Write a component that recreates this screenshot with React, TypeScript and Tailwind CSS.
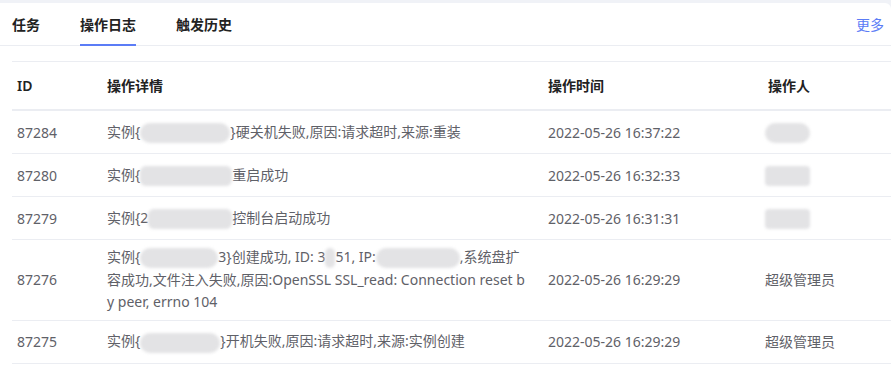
import React from 'react';

type Row = {
  id: string;
  detail: React.ReactNode;
  time: string;
  operator: React.ReactNode;
  tall?: boolean;
};

const Blur: React.FC<{ w: number; className?: string }> = ({ w, className }) => (
  <span
    className={`inline-block h-[20px] align-middle bg-[#e3e3e5] blur-[1.5px] ${className ?? 'rounded-full'}`}
    style={{ width: w }}
  />
);

const rows: Row[] = [
  {
    id: '87284',
    detail: (
      <>
        实例{'{'}
        <Blur w={90} />
        {'}'}硬关机失败,原因:请求超时,来源:重装
      </>
    ),
    time: '2022-05-26 16:37:22',
    operator: <Blur w={45} />,
  },
  {
    id: '87280',
    detail: (
      <>
        实例{'{'}
        <Blur w={92} className="rounded-md" />
        重启成功
      </>
    ),
    time: '2022-05-26 16:32:33',
    operator: <Blur w={45} className="rounded-sm" />,
  },
  {
    id: '87279',
    detail: (
      <>
        实例{'{'}2
        <Blur w={84} className="rounded-md" />
        控制台启动成功
      </>
    ),
    time: '2022-05-26 16:31:31',
    operator: <Blur w={45} className="rounded-sm" />,
  },
  {
    id: '87276',
    tall: true,
    detail: (
      <>
        <span className="block whitespace-nowrap">
          实例{'{'}
          <Blur w={78} />
          3{'}'}创建成功, ID: 3
          <Blur w={10} />
          51, IP:
          <Blur w={84} />
          ,系统盘扩
        </span>
        <span className="block whitespace-nowrap">容成功,文件注入失败,原因:OpenSSL SSL_read: Connection reset b</span>
        <span className="block whitespace-nowrap">y peer, errno 104</span>
      </>
    ),
    time: '2022-05-26 16:29:29',
    operator: '超级管理员',
  },
  {
    id: '87275',
    detail: (
      <>
        实例{'{'}
        <Blur w={80} />
        {'}'}开机失败,原因:请求超时,来源:实例创建
      </>
    ),
    time: '2022-05-26 16:29:29',
    operator: '超级管理员',
  },
];

const cols = 'grid grid-cols-[90px_441px_220px_1fr]';

export default function App() {
  return (
    <div
      className="w-[891px] h-[383px] bg-[#f0f2f7] pt-[3px] overflow-hidden"
      style={{ fontFamily: '"Noto Sans", "Noto Sans CJK SC", sans-serif' }}
    >
      <div className="bg-white h-full rounded-tr-md">
        {/* tabs */}
        <div className="flex items-center justify-between h-[43px] border-b border-[#ebedf2] pl-3 pr-[7px]">
          <div className="flex h-full gap-[40px]">
            <div className="flex items-center text-[14px] font-semibold text-[#222]">任务</div>
            <div className="relative flex items-center text-[14px] font-semibold text-[#222]">
              操作日志
              <span className="absolute left-0 right-0 bottom-[-1px] h-[2px] bg-[#5b7cf6]" />
            </div>
            <div className="flex items-center text-[14px] font-semibold text-[#222]">触发历史</div>
          </div>
          <span className="text-[14px] text-[#5b7cf6]">更多</span>
        </div>

        {/* table */}
        <div className="pl-3 pt-[15px]">
          <div className={`${cols} h-[50px] items-center border-t border-[#ebedf2] border-b-2 border-b-[#ebedf2] text-[14px] font-semibold text-[#222]`}>
            <div className="pl-[5px]">ID</div>
            <div className="pl-[5px]">操作详情</div>
            <div className="pl-[5px]">操作时间</div>
            <div className="pl-[5px]">操作人</div>
          </div>
          {rows.map((r) => (
            <div
              key={r.id}
              className={`${cols} items-center border-b border-[#ebedf2] text-[14px] text-[#5f6168] ${
                r.tall ? 'py-[6px] leading-[22.5px]' : 'h-[43px]'
              }`}
            >
              <div className="pl-[5px]">{r.id}</div>
              <div className="pl-[5px] whitespace-nowrap">{r.detail}</div>
              <div className="pl-[5px]">{r.time}</div>
              <div className="pl-[2px]">{r.operator}</div>
            </div>
          ))}
        </div>
      </div>
    </div>
  );
}
